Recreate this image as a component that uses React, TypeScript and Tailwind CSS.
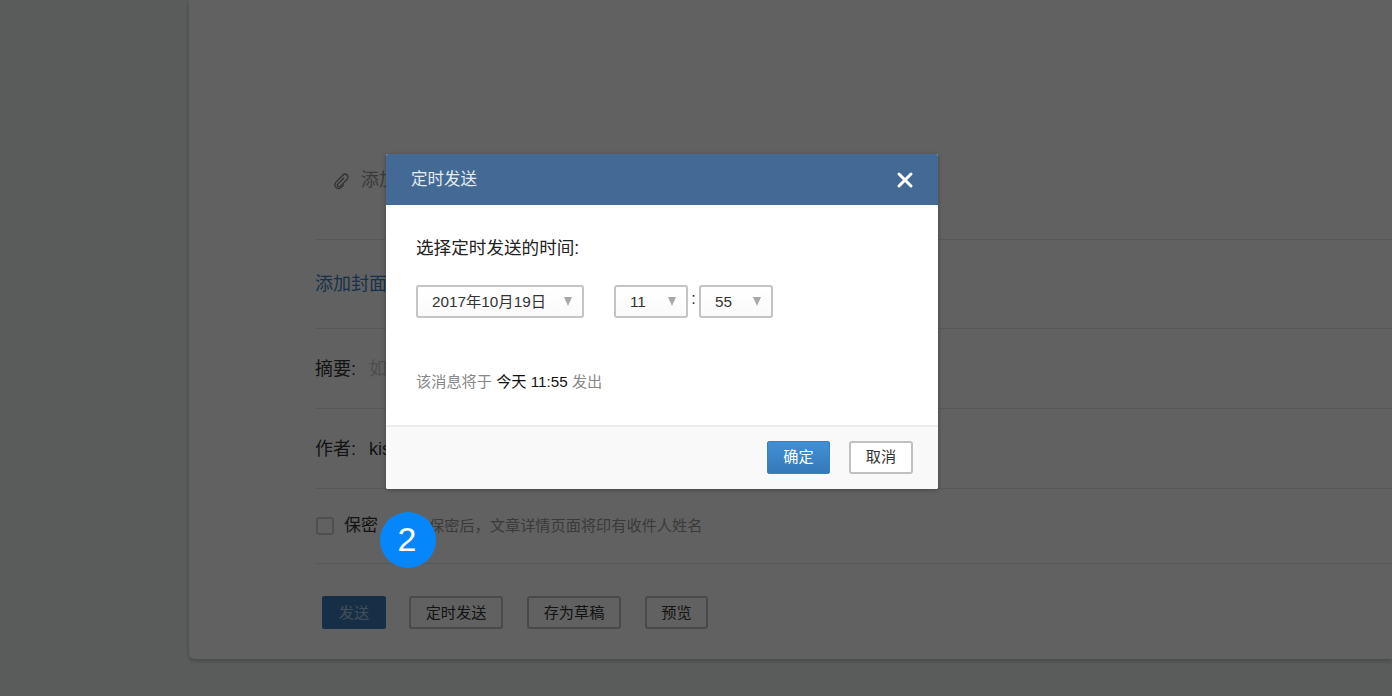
import { X } from 'lucide-react';

const font = 'font-["Liberation_Sans","Noto_Sans_CJK_SC",sans-serif]';

function Select({ value, width, arrow = 'right-[10px]' }: { value: string; width: string; arrow?: string }) {
  return (
    <div className={`relative flex h-[33px] items-center rounded-[3px] border-2 border-[#c4c4c4] bg-gradient-to-b from-white to-[#fafafa] pl-[14px] pt-px text-[15.3px] text-[#333] ${width}`}>
      {value}
      <span className={`absolute top-[10px] h-0 w-0 border-x-[4.5px] border-t-[9px] border-x-transparent border-t-[#a8a8a8] ${arrow}`} />
    </div>
  );
}

function Row({ className, children }: { className: string; children: React.ReactNode }) {
  return <div className={`flex items-center border-b border-[#e6e6e6] ${className}`}>{children}</div>;
}

function OutlineButton({ label, width, className = '' }: { label: string; width: string; className?: string }) {
  return (
    <button className={`flex h-[33px] items-center justify-center rounded-[3px] border-2 border-[#c0c0c0] bg-white text-[15.2px] text-[#333] ${width} ${className}`}>
      {label}
    </button>
  );
}

export default function App() {
  return (
    <div className={`relative h-[696px] w-[1392px] overflow-hidden bg-[#ebf1ed] ${font}`}>
      {/* page behind the dialog */}
      <div className="ml-[189px] h-[659px] rounded-bl-[6px] bg-white pl-[127px] shadow-[0_2px_4px_rgba(0,0,0,0.22)]">
        <Row className="h-[240px] items-start">
          <div className="ml-[17px] mt-[167px] flex items-center text-[18px] text-[#999]">
            <svg viewBox="0 0 16 16" fill="none" stroke="#7c7c7c" strokeWidth="1.1" strokeLinecap="round" className="mr-[10px] h-[18px] w-[18px]">
              <path d="M9.5 5.5 L4.2 10.8 a1.4 1.4 0 0 0 2 2 L12.6 6.4 a2.6 2.6 0 0 0 -3.7 -3.7 L2.6 9 a3.3 3.3 0 0 0 4.7 4.7 L9.5 11.5" />
            </svg>
            <span>添加</span>
          </div>
        </Row>
        <Row className="h-[89px]">
          <span className="-ml-px text-[18px] text-[#3f82c4]">添加封面</span>
        </Row>
        <Row className="h-[80px] pt-[1px]">
          <span className="-ml-px text-[18px] text-[#333]">摘要:</span>
          <span className="ml-[13px] text-[18px] text-[#ccc]">如</span>
        </Row>
        <Row className="h-[80px] pt-[2px]">
          <span className="-ml-px text-[18px] text-[#333]">作者:</span>
          <span className="ml-[13px] text-[18px] text-[#333]">kis</span>
        </Row>
        <Row className="h-[75px]">
          <span className="h-[18px] w-[18px] rounded-[3px] border-2 border-[#d0d0d0] bg-white" />
          <span className="ml-[10px] text-[17px] text-[#333]">保密</span>
          <span className="ml-[51px] text-[15.2px] text-[#999]">保密后，文章详情页面将印有收件人姓名</span>
        </Row>
        <div className="flex items-center pl-[6px] pt-[32px]">
          <button className="flex h-[33px] w-[64px] items-center justify-center rounded-[2px] bg-[#3b7db8] pt-px text-[15.2px] text-white/60">发送</button>
          <div className="ml-[23px]"><OutlineButton label="定时发送" width="w-[94px]" className="pt-px" /></div>
          <div className="ml-[24px]"><OutlineButton label="存为草稿" width="w-[94px]" className="pt-px" /></div>
          <div className="ml-[24px]"><OutlineButton label="预览" width="w-[63px]" className="pt-px" /></div>
        </div>
      </div>

      {/* mask */}
      <div className="absolute inset-0 bg-black/[0.62]" />

      {/* dialog */}
      <div className="absolute left-[386px] top-[154px] flex h-[335px] w-[552px] flex-col overflow-hidden rounded-[2px] bg-white shadow-[0_1px_4px_rgba(0,0,0,0.3)]">
        <div className="flex h-[51px] items-center justify-between bg-[#426a94] pl-[25px] pr-[21px]">
          <span className="text-[16.5px] text-[#e6ebf1]">定时发送</span>
          <X className="h-[24px] w-[24px] text-white" strokeWidth={3} />
        </div>
        <div className="flex-1 px-[30px] pt-[31px]">
          <div className="text-[17.6px] leading-[24px] text-[#222]">选择定时发送的时间:</div>
          <div className="mt-[25px] flex items-center">
            <Select value="2017年10月19日" width="w-[168px]" />
            <div className="ml-[30px]"><Select value="11" width="w-[74px]" /></div>
            <span className="mx-[3px] -mt-[6px] w-[5px] text-center text-[16px] text-[#333]">:</span>
            <Select value="55" width="w-[74px]" />
          </div>
          <div className="mt-[54px] text-[15.2px] leading-[20px] text-[#888]">
            该消息将于 <span className="text-[#111]">今天 11:55</span> 发出
          </div>
        </div>
        <div className="flex h-[64px] items-center justify-end gap-[19px] border-t-2 border-[#ececec] bg-[#f9f9f9] pb-[1px] pr-[25px]">
          <button className="flex h-[33px] w-[63px] items-center justify-center rounded-[2px] border border-[#3a80bf] bg-gradient-to-b from-[#428fd6] to-[#357ab8] text-[15.2px] text-white">确定</button>
          <OutlineButton label="取消" width="w-[64px]" />
        </div>
      </div>

      {/* step badge */}
      <div className="absolute left-[380px] top-[512px] flex h-[56px] w-[56px] items-center justify-center rounded-full bg-[#0587fb] pb-px pr-[2px] text-[34px] text-white">2</div>
    </div>
  );
}
